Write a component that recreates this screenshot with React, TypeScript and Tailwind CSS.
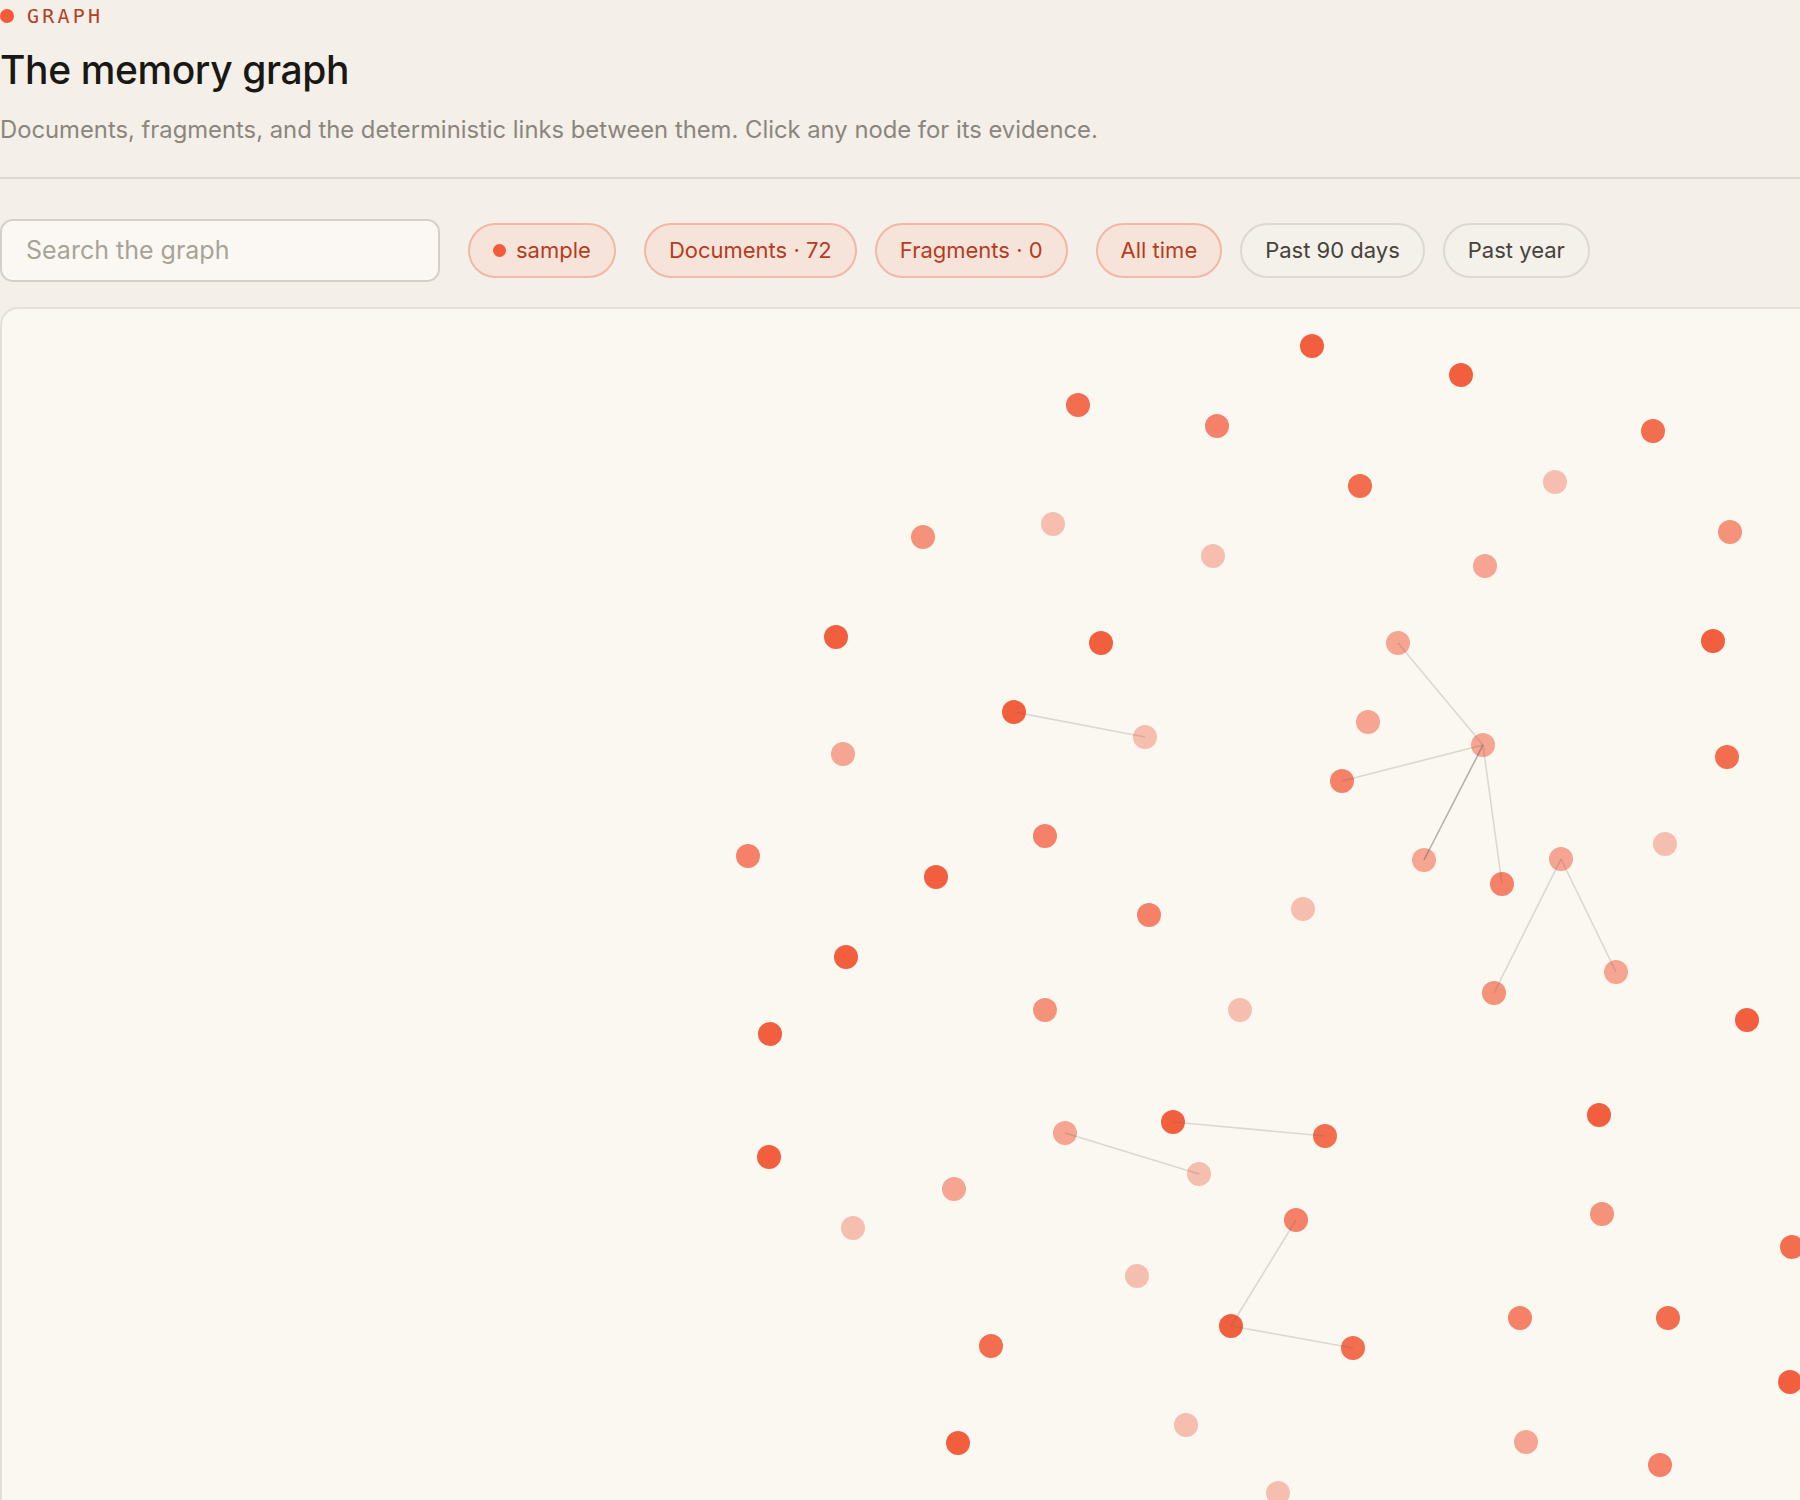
import React from 'react';

type Node = { x: number; y: number; tone: number };

// fill shades, strongest first
const tones = ['#F25F3F', '#F36D4F', '#F48168', '#F5927A', '#F5A592', '#F6BEAF'];

const nodes: Node[] = [
    { x: 1312, y: 346, tone: 0 },
    { x: 1461, y: 375, tone: 0 },
    { x: 1078, y: 405, tone: 1 },
    { x: 1217, y: 426, tone: 2 },
    { x: 1653, y: 431, tone: 1 },
    { x: 1360, y: 486, tone: 1 },
    { x: 1555, y: 482, tone: 5 },
    { x: 923, y: 537, tone: 3 },
    { x: 1053, y: 524, tone: 5 },
    { x: 1213, y: 556, tone: 5 },
    { x: 1485, y: 566, tone: 4 },
    { x: 1730, y: 532, tone: 3 },
    { x: 836, y: 637, tone: 0 },
    { x: 1101, y: 643, tone: 0 },
    { x: 1713, y: 641, tone: 0 },
    { x: 1398, y: 643, tone: 4 },
    { x: 1014, y: 712, tone: 0 },
    { x: 1145, y: 737, tone: 5 },
    { x: 843, y: 754, tone: 4 },
    { x: 1368, y: 722, tone: 4 },
    { x: 1483, y: 745, tone: 4 },
    { x: 1342, y: 781, tone: 2 },
    { x: 1727, y: 757, tone: 1 },
    { x: 748, y: 856, tone: 2 },
    { x: 1045, y: 836, tone: 2 },
    { x: 936, y: 877, tone: 0 },
    { x: 1424, y: 860, tone: 4 },
    { x: 1502, y: 884, tone: 2 },
    { x: 1561, y: 859, tone: 4 },
    { x: 1665, y: 844, tone: 5 },
    { x: 1149, y: 915, tone: 2 },
    { x: 1303, y: 909, tone: 5 },
    { x: 846, y: 957, tone: 0 },
    { x: 770, y: 1034, tone: 0 },
    { x: 1045, y: 1010, tone: 3 },
    { x: 1240, y: 1010, tone: 5 },
    { x: 1494, y: 993, tone: 3 },
    { x: 1616, y: 972, tone: 4 },
    { x: 1747, y: 1020, tone: 0 },
    { x: 1599, y: 1115, tone: 0 },
    { x: 1173, y: 1122, tone: 0 },
    { x: 1325, y: 1136, tone: 1 },
    { x: 1065, y: 1133, tone: 4 },
    { x: 1199, y: 1174, tone: 5 },
    { x: 769, y: 1157, tone: 0 },
    { x: 954, y: 1189, tone: 4 },
    { x: 853, y: 1228, tone: 5 },
    { x: 1296, y: 1220, tone: 2 },
    { x: 1602, y: 1214, tone: 3 },
    { x: 1792, y: 1247, tone: 1 },
    { x: 1137, y: 1276, tone: 5 },
    { x: 1231, y: 1326, tone: 0 },
    { x: 1353, y: 1348, tone: 1 },
    { x: 991, y: 1346, tone: 1 },
    { x: 1520, y: 1318, tone: 2 },
    { x: 1668, y: 1318, tone: 1 },
    { x: 1790, y: 1382, tone: 0 },
    { x: 958, y: 1443, tone: 0 },
    { x: 1186, y: 1425, tone: 5 },
    { x: 1526, y: 1442, tone: 4 },
    { x: 1660, y: 1465, tone: 2 },
    { x: 1278, y: 1493, tone: 5 },
];

// [from, to, strong]
const links: [number, number, boolean?][] = [
    [16, 17],
    [15, 20],
    [21, 20],
    [26, 20, true],
    [27, 20],
    [28, 36],
    [28, 37],
    [40, 41],
    [42, 43],
    [47, 51],
    [51, 52],
];

const Chip: React.FC<{ active?: boolean; children: React.ReactNode }> = ({ active, children }) => (
    <button
        className={
            active
                ? 'h-[55px] px-[23px] flex items-center gap-[10px] rounded-full border-2 border-[#f3b7a4] bg-[#f6e4da] text-[#b53d1d] text-[22px]'
                : 'h-[55px] px-[23px] flex items-center gap-[10px] rounded-full border-2 border-[#ddd8d0] bg-[#f4f0ea] text-[#47423b] text-[22px]'
        }
    >
        {children}
    </button>
);

const GraphCanvas: React.FC = () => (
    <div className="mt-[25px] w-[1880px] h-[1250px] rounded-tl-[18px] border-2 border-[#e5e0d8] bg-[#fbf8f2] overflow-hidden">
        <svg width={1880} height={1250} viewBox="2 309 1880 1250" className="block">
            {nodes.map((n, i) => (
                <circle key={i} cx={n.x} cy={n.y} r={12} fill={tones[n.tone]} />
            ))}
            {links.map(([a, b, strong], i) => (
                <line
                    key={i}
                    x1={nodes[a].x}
                    y1={nodes[a].y}
                    x2={nodes[b].x}
                    y2={nodes[b].y}
                    stroke={strong ? 'rgba(95,88,80,0.45)' : 'rgba(110,100,90,0.22)'}
                    strokeWidth={1.6}
                />
            ))}
        </svg>
    </div>
);

export default function App() {
    return (
        <div className="h-screen w-full overflow-hidden bg-[#f4f0e9] font-['Inter',sans-serif]">
            {/* Header */}
            <header className="border-b-2 border-[#ddd8d0] pb-[31px]">
                <div className="h-8 flex items-center gap-[13px]">
                    <span className="w-[14px] h-[14px] rounded-full bg-[#f25a38]" />
                    <span className="font-['DejaVu_Sans_Mono',monospace] text-[20px] tracking-[0.16em] text-[#b5401f]">GRAPH</span>
                </div>
                <h1 className="mt-[15px] text-[39px] leading-[1.2] font-medium tracking-[-0.01em] text-[#1a1814]">
                    The memory graph
                </h1>
                <p className="mt-[19px] text-[23.8px] leading-[33px] text-[#8b867d]">
                    Documents, fragments, and the deterministic links between them. Click any node for its evidence.
                </p>
            </header>

            {/* Filters */}
            <div className="mt-[40px] flex items-center gap-[28px]">
                <input
                    placeholder="Search the graph"
                    className="w-[440px] h-[63px] rounded-[13px] border-2 border-[#d4cfc7] bg-[#fbf8f3] px-[24px] text-[25px] text-[#2a2723] placeholder:text-[#a8a398] outline-none"
                />
                <Chip active>
                    <span className="w-[13px] h-[13px] rounded-full bg-[#f25a38]" />
                    sample
                </Chip>
                <div className="flex items-center gap-[18px]">
                    <Chip active>Documents · 72</Chip>
                    <Chip active>Fragments · 0</Chip>
                </div>
                <div className="flex items-center gap-[18px]">
                    <Chip active>All time</Chip>
                    <Chip>Past 90 days</Chip>
                    <Chip>Past year</Chip>
                </div>
            </div>

            <GraphCanvas />
        </div>
    );
}
